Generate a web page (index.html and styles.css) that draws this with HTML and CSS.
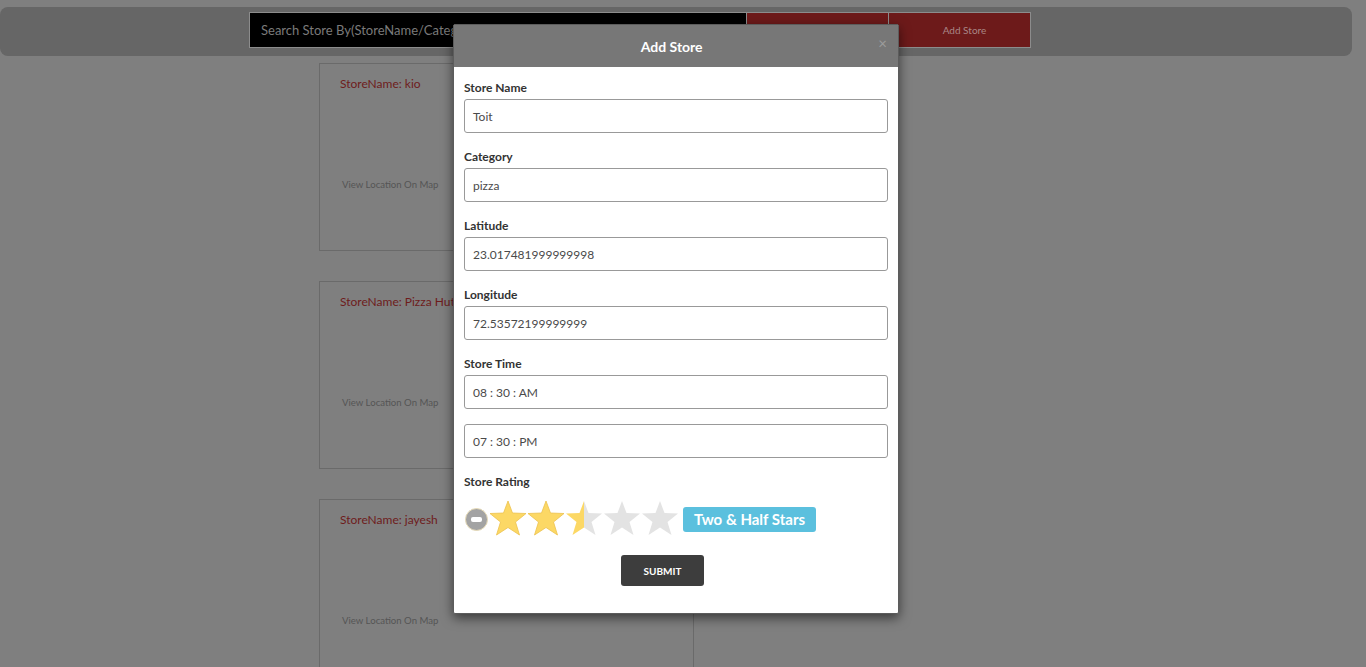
FILE: index.html
```html
<!DOCTYPE html>
<html lang="en">
<head>
<meta charset="utf-8">
<title>Stores</title>
<link rel="stylesheet" href="styles.css">
</head>
<body>
<header class="topbar">
  <div class="search">Search Store By(StoreName/Category)</div>
  <button class="btn-red"></button>
  <button class="btn-red btn-add">Add Store</button>
</header>

<main class="cards">
  <section class="card">
    <div class="card-name">StoreName: kio</div>
    <div class="card-link">View Location On Map</div>
  </section>
  <section class="card">
    <div class="card-name">StoreName: Pizza Hut</div>
    <div class="card-link">View Location On Map</div>
  </section>
  <section class="card">
    <div class="card-name">StoreName: jayesh</div>
    <div class="card-link">View Location On Map</div>
  </section>
</main>

<div class="modal">
  <div class="modal-header">
    <div class="modal-title">Add Store</div>
    <span class="close">&times;</span>
  </div>
  <form class="modal-body">
    <label class="label">Store Name</label>
    <div class="field">Toit</div>
    <label class="label">Category</label>
    <div class="field">pizza</div>
    <label class="label">Latitude</label>
    <div class="field">23.017481999999998</div>
    <label class="label">Longitude</label>
    <div class="field">72.53572199999999</div>
    <label class="label">Store Time</label>
    <div class="field">08 : 30 : AM</div>
    <div class="field">07 : 30 : PM</div>
    <label class="label">Store Rating</label>
    <div class="rating">
      <span class="minus"><span class="minus-bar"></span></span>
      <svg class="stars" width="190" height="36" viewBox="0 0 190 36">
        <defs>
          <linearGradient id="half" x1="0" x2="1" y1="0" y2="0">
            <stop offset="0.5" stop-color="#fcd865"/>
            <stop offset="0.5" stop-color="#e3e3e3"/>
          </linearGradient>
          <polygon id="star" points="19,1 23.5,13 37,13.5 26.5,22 30.5,35 19,27.5 7.5,35 11.5,22 1,13.5 14.5,13"/>
        </defs>
        <use href="#star" x="0" fill="#fcd865" stroke="#ecc24e" stroke-width="0.8"/>
        <use href="#star" x="38" fill="#fcd865" stroke="#ecc24e" stroke-width="0.8"/>
        <use href="#star" x="76" fill="url(#half)"/>
        <use href="#star" x="114" fill="#e3e3e3"/>
        <use href="#star" x="152" fill="#e3e3e3"/>
      </svg>
      <span class="badge">Two &amp; Half Stars</span>
    </div>
    <div class="actions">
      <button type="button" class="submit">SUBMIT</button>
    </div>
  </form>
</div>
</body>
</html>
```

FILE: styles.css
```css
* { box-sizing: border-box; }

html, body {
  margin: 0;
  padding: 0;
  height: 100%;
  overflow: hidden;
}

body {
  background: #7f7f7f;
  font-family: Lato, "Open Sans", sans-serif;
}

.topbar {
  margin-top: 7px;
  width: 1352px;
  height: 49px;
  background: #666666;
  border-radius: 8px;
  display: flex;
  align-items: flex-start;
  padding: 5px 0 0 249px;
}

.search {
  width: 498px;
  height: 36px;
  background: #000;
  border: 1px solid #8c8c8c;
  color: #7a7a7a;
  font-size: 13px;
  line-height: 34px;
  padding-left: 11px;
  white-space: nowrap;
  overflow: hidden;
}

.btn-red {
  width: 142px;
  height: 36px;
  background: #6d1a1a;
  border: 1px solid #8c8c8c;
  border-left: none;
  color: #a98686;
  font-family: Lato, sans-serif;
  font-size: 10px;
  padding: 0;
}

.btn-add {
  padding-left: 10px;
}

.cards {
  margin-left: 319px;
  margin-top: 7px;
  width: 375px;
}

.card {
  height: 188px;
  border: 1px solid #6a6a6a;
  margin-bottom: 30px;
  padding: 12px 0 0 20px;
}

.card-name {
  color: #6e1c1c;
  font-size: 12px;
  line-height: 16px;
  white-space: nowrap;
}

.card-link {
  margin-top: 86px;
  margin-left: 2px;
  color: #555555;
  font-size: 9.6px;
  line-height: 14px;
}

.modal {
  position: absolute;
  top: 24px;
  left: 453px;
  width: 446px;
  background: #fff;
  border: 1px solid #5c5c5c;
  border-radius: 2px;
  box-shadow: 0 4px 12px rgba(0, 0, 0, 0.55);
}

.modal-header {
  height: 42px;
  background: #777777;
  display: flex;
  align-items: center;
  padding: 0 11px 0 15px;
}

.modal-title {
  flex: 1;
  text-align: center;
  color: #fff;
  font-weight: 700;
  font-size: 14px;
  padding-right: 4px;
}

.close {
  color: #9c9c9c;
  font-size: 15px;
  line-height: 15px;
  margin-top: -6px;
}

.modal-body {
  padding: 12px 10px 27px 10px;
  display: flex;
  flex-direction: column;
  margin: 0;
}

.label {
  display: block;
  font-size: 12px;
  font-weight: 700;
  color: #333333;
  line-height: 17px;
  margin-bottom: 3px;
}

.field {
  height: 34px;
  border: 1px solid #999999;
  border-radius: 3px;
  padding: 1px 0 0 8px;
  font-size: 12px;
  line-height: 32px;
  color: #4a4a4a;
  margin-bottom: 15px;
}

.rating {
  display: flex;
  align-items: center;
  height: 36px;
  margin-top: 8px;
}

.minus {
  width: 23px;
  height: 23px;
  border-radius: 50%;
  background: #a3a3a3;
  border: 1px solid #e8dcb8;
  display: flex;
  align-items: center;
  justify-content: center;
  margin-left: 1px;
  margin-top: 1px;
}

.minus-bar {
  width: 11px;
  height: 5px;
  border-radius: 2px;
  background: #fff;
}

.stars {
  display: block;
  margin-left: 1px;
  margin-top: -2px;
}

.badge {
  margin-left: 4px;
  height: 25px;
  padding: 0 11px;
  background: #5bc0de;
  border-radius: 3px;
  color: #fff;
  font-weight: 700;
  font-size: 15px;
  line-height: 25px;
  white-space: nowrap;
}

.actions {
  margin-top: 18px;
}

.submit {
  margin-left: 157px;
  width: 83px;
  height: 31px;
  background: #3d3d3d;
  border: none;
  border-radius: 3px;
  color: #fff;
  font-family: Lato, sans-serif;
  font-weight: 700;
  font-size: 10px;
  padding: 0;
}
```
